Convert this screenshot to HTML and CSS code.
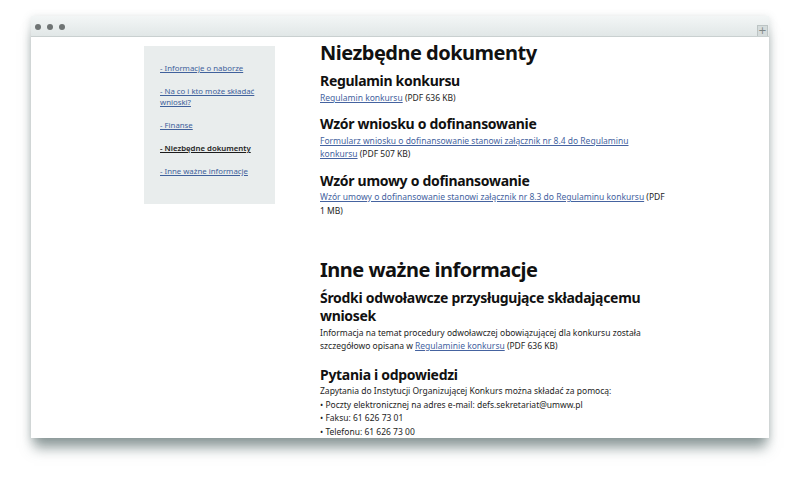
FILE: index.html
```html
<!DOCTYPE html>
<html lang="pl">
<head>
<meta charset="utf-8">
<title>Niezbędne dokumenty</title>
<link rel="stylesheet" href="styles.css">
</head>
<body>
<div class="window">
  <div class="titlebar">
    <div class="dots"><span class="dot"></span><span class="dot"></span><span class="dot"></span></div>
    <div class="plus">+</div>
  </div>
  <div class="content">
    <nav class="sidebar">
      <a class="nav-link" href="#">- Informacje o naborze</a>
      <a class="nav-link" href="#">- Na co i kto może składać wnioski?</a>
      <a class="nav-link" href="#">- Finanse</a>
      <a class="nav-link active" href="#">- Niezbędne dokumenty</a>
      <a class="nav-link" href="#">- Inne ważne informacje</a>
    </nav>
    <main class="main">
      <h1 class="h1">Niezbędne dokumenty</h1>
      <section class="sec first">
        <h2 class="h2">Regulamin konkursu</h2>
        <p class="txt"><a class="lnk" href="#">Regulamin konkursu</a> (PDF 636 KB)</p>
      </section>
      <section class="sec">
        <h2 class="h2">Wzór wniosku o dofinansowanie</h2>
        <p class="txt"><a class="lnk" href="#">Formularz wniosku o dofinansowanie stanowi załącznik nr 8.4 do Regulaminu konkursu</a>&nbsp;(PDF 507 KB)</p>
      </section>
      <section class="sec">
        <h2 class="h2">Wzór umowy o dofinansowanie</h2>
        <p class="txt"><a class="lnk" href="#">Wzór umowy o dofinansowanie stanowi załącznik nr 8.3 do Regulaminu konkursu</a>&nbsp;(PDF 1&nbsp;MB)</p>
      </section>
      <h1 class="h1 second">Inne ważne informacje</h1>
      <section class="sec first">
        <h2 class="h2">Środki odwoławcze przysługujące składającemu wniosek</h2>
        <p class="txt">Informacja na temat procedury odwoławczej obowiązującej dla konkursu została szczegółowo opisana w <a class="lnk" href="#">Regulaminie konkursu</a> (PDF 636 KB)</p>
      </section>
      <section class="sec last">
        <h2 class="h2">Pytania i odpowiedzi</h2>
        <p class="txt">Zapytania do Instytucji Organizującej Konkurs można składać za pomocą:</p>
        <p class="txt">• Poczty elektronicznej na adres e-mail: defs.sekretariat@umww.pl</p>
        <p class="txt">• Faksu: 61 626 73 01</p>
        <p class="txt">• Telefonu: 61 626 73 00</p>
      </section>
    </main>
  </div>
</div>
</body>
</html>
```
FILE: styles.css
```css
* { box-sizing: border-box; }
html, body { margin: 0; padding: 0; background: #ffffff; }
body {
  font-family: "Noto Sans", "Open Sans", sans-serif;
  color: #1a1a1a;
  padding: 16px 31px 0 31px;
  height: 483px;
  overflow: hidden;
}
.window {
  width: 738px;
  height: 422px;
  background: #fff;
  box-shadow: 0 13px 12px -3px rgba(80, 100, 100, 0.6), 0 2px 8px rgba(90, 110, 110, 0.25);
  display: flex;
  flex-direction: column;
}
.titlebar {
  height: 21px;
  flex: none;
  background: linear-gradient(#f3f6f6, #e1e7e7);
  border-bottom: 1px solid #c9d0d0;
  display: flex;
  align-items: flex-end;
  justify-content: space-between;
  padding: 0 1px 0 4px;
}
.dots { display: flex; gap: 6px; align-self: center; margin-top: 2px; }
.dot { width: 6px; height: 6px; border-radius: 50%; background: #6f7474; }
.plus {
  width: 11px;
  height: 11px;
  background: #d5dcdc;
  border: 1px solid #bcc4c4;
  border-bottom: none;
  color: #7d8585;
  font-size: 10px;
  line-height: 9px;
  text-align: center;
  font-family: "DejaVu Sans", sans-serif;
}
.content {
  flex: 1;
  display: flex;
  gap: 45px;
  padding-left: 113px;
  overflow: hidden;
}
.sidebar {
  flex: none;
  width: 131px;
  align-self: flex-start;
  margin-top: 9px;
  background: #e9eded;
  padding: 17px 10px 27px 16px;
  display: flex;
  flex-direction: column;
  gap: 12px;
}
.nav-link {
  font-size: 7.8px;
  line-height: 11px;
  color: #40619c;
  text-decoration: underline;
}
.nav-link.active { color: #1c1c1c; font-weight: 600; }
.main { flex: none; width: 346px; }
.h1 {
  margin: 3px 0 0 0;
  font-size: 20px;
  letter-spacing: -0.5px;
  line-height: 26px;
  font-weight: 700;
  color: #111;
}
.h1.second { margin-top: 40px; }
.h2 {
  margin: 0;
  font-size: 14px;
  letter-spacing: -0.3px;
  line-height: 18px;
  font-weight: 700;
  color: #111;
}
.h2 + .txt { margin-top: 0.5px; }
.sec { margin-top: 11px; }
.sec.first { margin-top: 6px; }
.sec.last { margin-top: 13px; }
.txt {
  margin: 0;
  font-size: 8.5px;
  line-height: 13.5px;
  color: #1d1d1d;
}
.lnk { color: #4563a0; text-decoration: underline; }
```
